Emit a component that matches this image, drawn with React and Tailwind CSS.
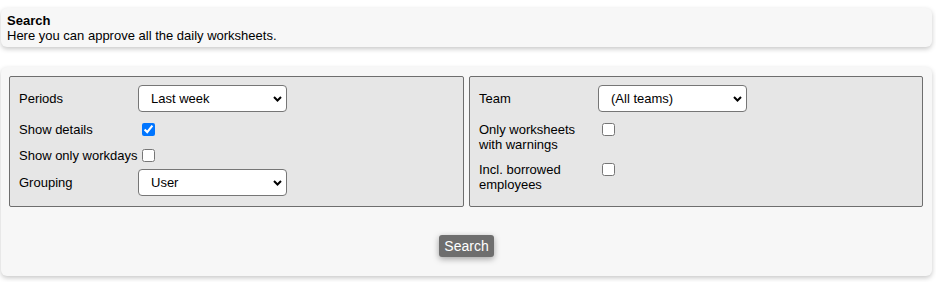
import React from "react";

function Chevron() {
  return (
    <svg
      className="pointer-events-none absolute right-[5px] top-1/2 -translate-y-1/2"
      width="9"
      height="6"
      viewBox="0 0 9 6"
    >
      <path d="M1 1 L4.5 4.5 L8 1" fill="none" stroke="#000" strokeWidth="2" />
    </svg>
  );
}

function Select({ value, options }) {
  return (
    <div className="relative w-[149px] h-[27px]">
      <select
        defaultValue={value}
        className="appearance-none w-full h-full bg-white border border-[#767676] rounded-[4px] pl-[12px] pr-[18px] text-[13px] text-black outline-none"
      >
        {options.map((o) => (
          <option key={o}>{o}</option>
        ))}
      </select>
      <Chevron />
    </div>
  );
}

function Check({ checked, className = "" }) {
  return (
    <input
      type="checkbox"
      defaultChecked={checked}
      className={"m-0 w-[13px] h-[13px] " + className}
    />
  );
}

export default function App() {
  return (
    <div className="w-[936px] h-[282px] bg-white pt-[8px] font-['Liberation_Sans',Arial,sans-serif] text-black">
      <div className="ml-[1px] w-[931px] h-[39px] rounded-[6px] bg-[#f7f7f7] shadow-[0_2px_5px_rgba(0,0,0,0.22)] px-[6px] pt-[5px] text-[13px] leading-[15px]">
        <div className="font-bold">Search</div>
        <div>Here you can approve all the daily worksheets.</div>
      </div>

      <div className="mt-[20px] ml-[1px] w-[931px] h-[209px] rounded-[6px] bg-[#f7f7f7] shadow-[0_2px_5px_rgba(0,0,0,0.22)] pl-[8px] pr-[9px] pt-[9px]">
        <div className="flex gap-[5px] text-[13px] leading-[15px]">
          <div className="w-[455px] h-[131px] bg-[#e6e6e6] border border-[#6e6e6e] rounded-[2px] pl-[9px] pt-[8px]">
            <div className="flex items-center h-[27px]">
              <div className="w-[119px]">Periods</div>
              <Select value="Last week" options={["Last week", "This week", "Last month"]} />
            </div>
            <div className="flex items-center h-[26px] mt-[4px]">
              <div className="w-[119px]">Show details</div>
              <Check checked className="ml-[4px]" />
            </div>
            <div className="flex items-center h-[26px]">
              <div className="w-[119px]">Show only workdays</div>
              <Check className="ml-[4px]" />
            </div>
            <div className="flex items-center h-[27px] mt-[1px]">
              <div className="w-[119px]">Grouping</div>
              <Select value="User" options={["User", "Team", "Date"]} />
            </div>
          </div>

          <div className="flex-1 h-[131px] bg-[#e6e6e6] border border-[#6e6e6e] rounded-[2px] pl-[9px] pt-[8px]">
            <div className="flex items-center h-[27px]">
              <div className="w-[119px]">Team</div>
              <Select value="(All teams)" options={["(All teams)"]} />
            </div>
            <div className="flex items-start mt-[10px]">
              <div className="w-[119px]">
                Only worksheets
                <br />
                with warnings
              </div>
              <Check className="ml-[4px] mt-[1px]" />
            </div>
            <div className="flex items-start mt-[10px]">
              <div className="w-[119px]">
                Incl. borrowed
                <br />
                employees
              </div>
              <Check className="ml-[4px] mt-[1px]" />
            </div>
          </div>
        </div>

        <div className="flex justify-center mt-[28px]">
          <button className="w-[55px] h-[22px] bg-[#6e6e6e] text-white text-[14px] leading-[16px] rounded-[3px] shadow-[0_2px_6px_rgba(0,0,0,0.35)] pl-[1px]">
            Search
          </button>
        </div>
      </div>
    </div>
  );
}
